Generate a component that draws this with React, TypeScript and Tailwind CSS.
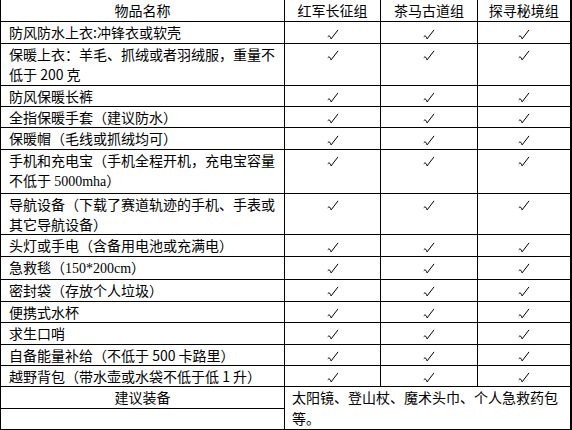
import type { ReactNode } from "react";

const serif = (s: string) => (
  <span className="font-['Liberation_Serif',serif]">{s}</span>
);

const items: { label: ReactNode; checks: boolean }[] = [
  { label: "防风防水上衣:冲锋衣或软壳", checks: true },
  { label: "保暖上衣：羊毛、抓绒或者羽绒服，重量不低于 200 克", checks: true },
  { label: "防风保暖长裤", checks: true },
  { label: "全指保暖手套（建议防水）", checks: true },
  { label: "保暖帽（毛线或抓绒均可）", checks: true },
  { label: <>手机和充电宝（手机全程开机，充电宝容量不低于 {serif("5000mha")}）</>, checks: true },
  { label: "导航设备（下载了赛道轨迹的手机、手表或其它导航设备）", checks: true },
  { label: "头灯或手电（含备用电池或充满电）", checks: true },
  { label: <>急救毯（{serif("150*200cm")}）</>, checks: true },
  { label: "密封袋（存放个人垃圾）", checks: true },
  { label: "便携式水杯", checks: true },
  { label: "求生口哨", checks: true },
  { label: "自备能量补给（不低于 500 卡路里）", checks: true },
  { label: "越野背包（带水壶或水袋不低于低 1 升）", checks: true },
];

const groups = ["红军长征组", "茶马古道组", "探寻秘境组"];

function Tick() {
  // old 宋体 style "√": little wave on the left, long thin stroke up-right
  return (
    <svg width="12" height="12" viewBox="0 0 12 12" className="inline-block align-middle">
      <path
        d="M1 7.4 Q1.9 6.3 2.8 7.3 Q3.4 8 4.1 9.9 L10.8 1.2"
        fill="none"
        stroke="#000"
        strokeWidth="1"
        strokeLinecap="round"
        strokeLinejoin="round"
      />
    </svg>
  );
}

const cell = "border border-black align-top leading-[20.4px] p-0";

export default function App() {
  return (
    <div className="h-[430px] w-[572px] overflow-hidden bg-white text-[14px] text-black font-['Noto_Sans_CJK_SC','Noto_Sans',sans-serif]">
      <table className="table-fixed border-collapse w-[570px] border-r-2 border-r-black">
        <colgroup>
          <col className="w-[284px]" />
          <col className="w-[96px]" />
          <col className="w-[97px]" />
          <col className="w-[93px]" />
        </colgroup>
        <thead>
          <tr>
            <th className={`${cell} border-t-0 font-normal text-center leading-[21.4px]`}>物品名称</th>
            {groups.map((g) => (
              <th key={g} className={`${cell} border-t-0 font-normal text-center leading-[21.4px]`}>
                {g}
              </th>
            ))}
          </tr>
        </thead>
        <tbody>
          {items.map((it, i) => (
            <tr key={i}>
              <td className={`${cell} pl-[8px] pr-[6px] text-left`}>{it.label}</td>
              {groups.map((g) => (
                <td key={g} className={`${cell} text-center`}>
                  {it.checks && <Tick />}
                </td>
              ))}
            </tr>
          ))}
          <tr>
            <td className={`${cell} text-center`}>建议装备</td>
            <td colSpan={3} rowSpan={2} className={`${cell} pl-[7px] pr-[6px] text-left`}>
              太阳镜、登山杖、魔术头巾、个人急救药包等。
            </td>
          </tr>
          <tr>
            <td className={`${cell} text-center`}>&nbsp;</td>
          </tr>
          <tr>
            <td className={cell}>&nbsp;</td>
            <td className={cell}>&nbsp;</td>
            <td className={cell}>&nbsp;</td>
            <td className={cell}>&nbsp;</td>
          </tr>
        </tbody>
      </table>
    </div>
  );
}
